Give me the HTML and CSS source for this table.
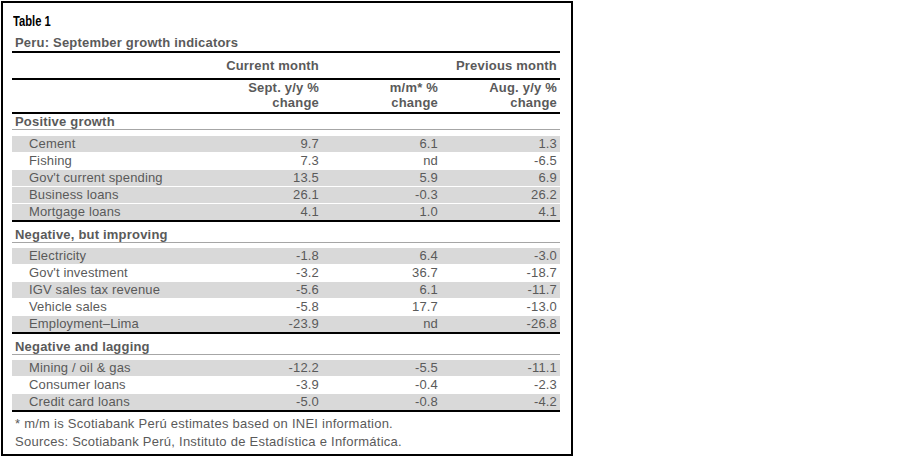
FILE: index.html
```html
<!DOCTYPE html>
<html lang="en">
<head>
<meta charset="utf-8">
<title>Table 1 – Peru: September growth indicators</title>
<link rel="stylesheet" href="styles.css">
</head>
<body>
<div class="card">
  <div class="label"><span class="label-text">Table 1</span></div>
  <div class="title">Peru: September growth indicators</div>

  <div class="row head1">
    <span></span><span class="num">Current month</span><span></span><span class="num">Previous month</span>
  </div>
  <div class="row head2">
    <span></span>
    <span class="num">Sept. y/y %<br>change</span>
    <span class="num">m/m* %<br>change</span>
    <span class="num">Aug. y/y %<br>change</span>
  </div>

  <section class="group first">
    <div class="group-title">Positive growth</div>
    <div class="rows">
      <div class="row data shade"><span class="name">Cement</span><span class="num">9.7</span><span class="num">6.1</span><span class="num">1.3</span></div>
      <div class="row data"><span class="name">Fishing</span><span class="num">7.3</span><span class="num">nd</span><span class="num">-6.5</span></div>
      <div class="row data shade"><span class="name">Gov't current spending</span><span class="num">13.5</span><span class="num">5.9</span><span class="num">6.9</span></div>
      <div class="row data shade"><span class="name">Business loans</span><span class="num">26.1</span><span class="num">-0.3</span><span class="num">26.2</span></div>
      <div class="row data shade"><span class="name">Mortgage loans</span><span class="num">4.1</span><span class="num">1.0</span><span class="num">4.1</span></div>
    </div>
  </section>

  <section class="group">
    <div class="group-title">Negative, but improving</div>
    <div class="rows">
      <div class="row data shade"><span class="name">Electricity</span><span class="num">-1.8</span><span class="num">6.4</span><span class="num">-3.0</span></div>
      <div class="row data"><span class="name">Gov't investment</span><span class="num">-3.2</span><span class="num">36.7</span><span class="num">-18.7</span></div>
      <div class="row data shade"><span class="name">IGV sales tax revenue</span><span class="num">-5.6</span><span class="num">6.1</span><span class="num">-11.7</span></div>
      <div class="row data"><span class="name">Vehicle sales</span><span class="num">-5.8</span><span class="num">17.7</span><span class="num">-13.0</span></div>
      <div class="row data shade"><span class="name">Employment‒Lima</span><span class="num">-23.9</span><span class="num">nd</span><span class="num">-26.8</span></div>
    </div>
  </section>

  <section class="group">
    <div class="group-title">Negative and lagging</div>
    <div class="rows">
      <div class="row data shade"><span class="name">Mining / oil &amp; gas</span><span class="num">-12.2</span><span class="num">-5.5</span><span class="num">-11.1</span></div>
      <div class="row data"><span class="name">Consumer loans</span><span class="num">-3.9</span><span class="num">-0.4</span><span class="num">-2.3</span></div>
      <div class="row data shade"><span class="name">Credit card loans</span><span class="num">-5.0</span><span class="num">-0.8</span><span class="num">-4.2</span></div>
    </div>
  </section>

  <div class="notes">
    <p>* m/m is Scotiabank Perú estimates based on INEI information.</p>
    <p>Sources: Scotiabank Perú, Instituto de Estadística e Informática.</p>
  </div>
</div>
</body>
</html>
```

FILE: styles.css
```css
* { box-sizing: border-box; }

html, body {
  margin: 0;
  padding: 0;
  background: #ffffff;
}

body {
  font-family: "Liberation Sans", Arial, sans-serif;
  font-size: 13px;
  color: #5a5a5a;
}

.card {
  margin: 1px 0 0 1px;
  width: 572px;
  height: 455px;
  border: 2px solid #000;
  padding: 11px 11px 0 9px;
}

.label {
  font-weight: bold;
  font-size: 14px;
  line-height: 15px;
  color: #000;
  padding-left: 1px;
}

.label-text {
  display: inline-block;
  transform: scaleX(0.8);
  transform-origin: left center;
}

.title {
  margin-top: 6px;
  font-weight: bold;
  line-height: 15px;
  letter-spacing: 0.2px;
  padding: 0 0 1px 3px;
  border-bottom: 2px solid #000;
}

.row {
  display: grid;
  grid-template-columns: 207px 100px 119px 119px;
  padding-right: 3px;
}

.num {
  text-align: right;
}

.head1 {
  font-weight: bold;
  letter-spacing: 0.2px;
  line-height: 15px;
  padding-top: 5px;
  padding-bottom: 5px;
  border-bottom: 2px solid #000;
  white-space: nowrap;
}

.head2 {
  font-weight: bold;
  letter-spacing: 0.2px;
  line-height: 15px;
  padding-top: 0;
  padding-bottom: 2px;
  border-bottom: 2px solid #000;
  white-space: nowrap;
}

.group {
  border-bottom: 2px solid #000;
}

.group-title {
  font-weight: bold;
  letter-spacing: 0.2px;
  line-height: 15px;
  padding: 5px 0 0 3px;
  border-bottom: 1px solid #a6a6a6;
}

.rows {
  padding-top: 4px;
}

.group.first .group-title {
  padding-top: 0;
}

.group.first .rows {
  padding-top: 5px;
}

.data {
  height: 17px;
  line-height: 16px;
  letter-spacing: 0.15px;
  border-top: 1px solid transparent;
  background-clip: padding-box;
  white-space: nowrap;
}

.shade {
  background-color: #d9d9d9;
}

.name {
  padding-left: 17px;
}

.notes {
  padding: 3px 0 0 3px;
  letter-spacing: 0.25px;
}

.notes p {
  margin: 0;
  line-height: 18px;
}
```
